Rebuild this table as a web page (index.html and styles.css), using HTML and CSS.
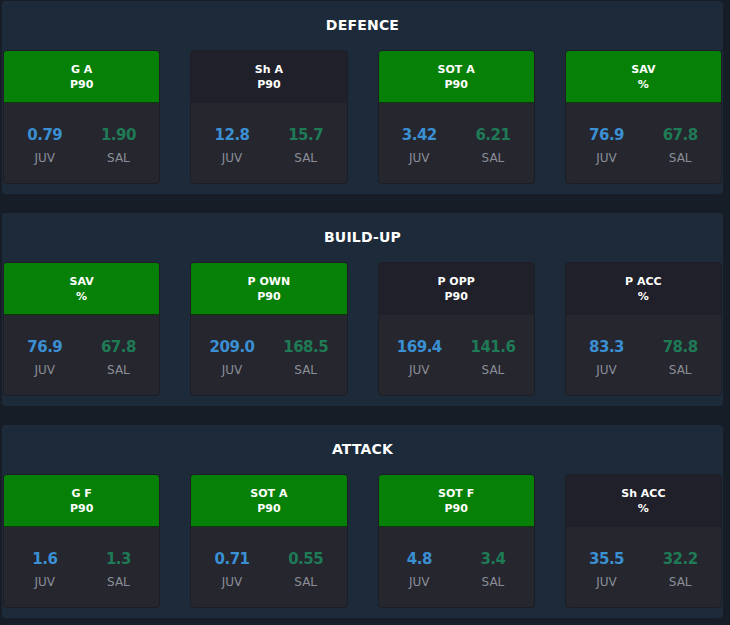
FILE: index.html
```html
<!DOCTYPE html>
<html>
<head>
<meta charset="utf-8">
<link rel="stylesheet" href="styles.css">
</head>
<body>
<div class="page">
  <section class="panel">
    <h2 class="panel-title">DEFENCE</h2>
    <div class="cards">
      <div class="card"><div class="card-head win">G A<br>P90</div><div class="card-body"><div class="stat"><span class="val juv">0.79</span><span class="lbl">JUV</span></div><div class="stat"><span class="val sal">1.90</span><span class="lbl">SAL</span></div></div></div>
      <div class="card"><div class="card-head">Sh A<br>P90</div><div class="card-body"><div class="stat"><span class="val juv">12.8</span><span class="lbl">JUV</span></div><div class="stat"><span class="val sal">15.7</span><span class="lbl">SAL</span></div></div></div>
      <div class="card"><div class="card-head win">SOT A<br>P90</div><div class="card-body"><div class="stat"><span class="val juv">3.42</span><span class="lbl">JUV</span></div><div class="stat"><span class="val sal">6.21</span><span class="lbl">SAL</span></div></div></div>
      <div class="card"><div class="card-head win">SAV<br>%</div><div class="card-body"><div class="stat"><span class="val juv">76.9</span><span class="lbl">JUV</span></div><div class="stat"><span class="val sal">67.8</span><span class="lbl">SAL</span></div></div></div>
    </div>
  </section>
  <section class="panel">
    <h2 class="panel-title">BUILD-UP</h2>
    <div class="cards">
      <div class="card"><div class="card-head win">SAV<br>%</div><div class="card-body"><div class="stat"><span class="val juv">76.9</span><span class="lbl">JUV</span></div><div class="stat"><span class="val sal">67.8</span><span class="lbl">SAL</span></div></div></div>
      <div class="card"><div class="card-head win">P OWN<br>P90</div><div class="card-body"><div class="stat"><span class="val juv">209.0</span><span class="lbl">JUV</span></div><div class="stat"><span class="val sal">168.5</span><span class="lbl">SAL</span></div></div></div>
      <div class="card"><div class="card-head">P OPP<br>P90</div><div class="card-body"><div class="stat"><span class="val juv">169.4</span><span class="lbl">JUV</span></div><div class="stat"><span class="val sal">141.6</span><span class="lbl">SAL</span></div></div></div>
      <div class="card"><div class="card-head">P ACC<br>%</div><div class="card-body"><div class="stat"><span class="val juv">83.3</span><span class="lbl">JUV</span></div><div class="stat"><span class="val sal">78.8</span><span class="lbl">SAL</span></div></div></div>
    </div>
  </section>
  <section class="panel">
    <h2 class="panel-title">ATTACK</h2>
    <div class="cards">
      <div class="card"><div class="card-head win">G F<br>P90</div><div class="card-body"><div class="stat"><span class="val juv">1.6</span><span class="lbl">JUV</span></div><div class="stat"><span class="val sal">1.3</span><span class="lbl">SAL</span></div></div></div>
      <div class="card"><div class="card-head win">SOT A<br>P90</div><div class="card-body"><div class="stat"><span class="val juv">0.71</span><span class="lbl">JUV</span></div><div class="stat"><span class="val sal">0.55</span><span class="lbl">SAL</span></div></div></div>
      <div class="card"><div class="card-head win">SOT F<br>P90</div><div class="card-body"><div class="stat"><span class="val juv">4.8</span><span class="lbl">JUV</span></div><div class="stat"><span class="val sal">3.4</span><span class="lbl">SAL</span></div></div></div>
      <div class="card"><div class="card-head">Sh ACC<br>%</div><div class="card-body"><div class="stat"><span class="val juv">35.5</span><span class="lbl">JUV</span></div><div class="stat"><span class="val sal">32.2</span><span class="lbl">SAL</span></div></div></div>
    </div>
  </section>
</div>
</body>
</html>
```
FILE: styles.css
```css
html, body {
  margin: 0;
  padding: 0;
  background: #161d26;
  font-family: "DejaVu Sans", "Open Sans", sans-serif;
}
.page {
  padding: 1px 7px 0 2px;
  display: flex;
  flex-direction: column;
  gap: 19px;
}
.panel {
  background: #1c2a39;
  border-radius: 4px;
  height: 193px;
  box-sizing: border-box;
  padding: 0 1px 10px 1px;
  display: flex;
  flex-direction: column;
}
.panel-title {
  margin: 0;
  height: 49px;
  line-height: 48px;
  text-align: center;
  color: #ffffff;
  font-size: 14px;
  font-weight: bold;
  letter-spacing: 0.2px;
}
.cards {
  display: flex;
  gap: 30px;
  flex: 1;
}
.card {
  flex: 1;
  display: flex;
  flex-direction: column;
  background: #25262e;
  border: 1px solid #1d1e25;
  border-radius: 4px;
  overflow: hidden;
}
.card-head {
  height: 52px;
  box-sizing: border-box;
  display: flex;
  align-items: center;
  justify-content: center;
  text-align: center;
  color: #ffffff;
  font-size: 11px;
  font-weight: bold;
  line-height: 15px;
  background: #1f2029;
}
.card-head.win {
  background: #068006;
  border-bottom: 1px solid #0a3a0a;
}
.card-body {
  flex: 1;
  display: grid;
  grid-template-columns: 1fr 1fr;
  padding: 4px 4px 0;
  align-items: center;
}
.stat {
  display: flex;
  flex-direction: column;
  align-items: center;
  gap: 7px;
}
.val {
  font-size: 15px;
  font-weight: bold;
  letter-spacing: -0.5px;
  line-height: 18px;
}
.val.juv { color: #3b8fd3; }
.val.sal { color: #1f7a56; }
.lbl {
  font-size: 12px;
  color: #8b8e98;
  line-height: 14px;
}
```
